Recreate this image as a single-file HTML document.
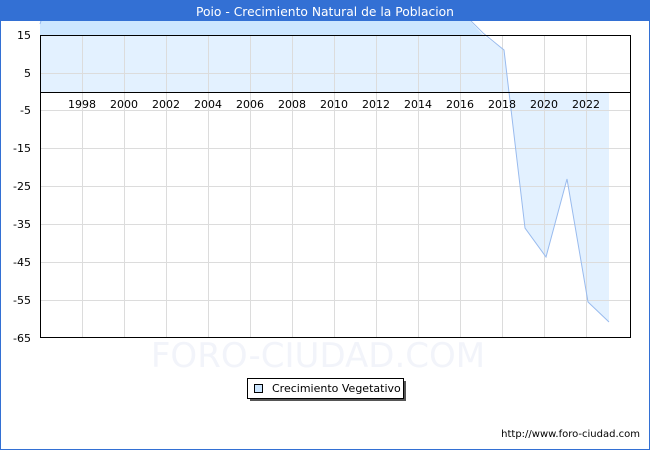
<!DOCTYPE html>
<html><head><meta charset="utf-8"><style>
body{margin:0;width:650px;height:450px;overflow:hidden;background:#fff;font-family:"DejaVu Sans","Liberation Sans",sans-serif}
</style></head><body>
<svg width="650" height="450" xmlns="http://www.w3.org/2000/svg" font-family="DejaVu Sans, Liberation Sans, sans-serif">
<rect x="0.5" y="0.5" width="649" height="449" fill="#fff" stroke="#3370d4"/>
<polygon points="40,21 470,21 483,35 40,35" fill="#cce6ff"/>
<polygon points="40,35 483,35 504,50 525,228 546,257 567,179 588,302 609,322 609,92 40,92" fill="#e3f1ff"/>
<g stroke="#dcdcdc" stroke-width="1">
<line x1="40" y1="73.5" x2="630" y2="73.5"/><line x1="40" y1="110.5" x2="630" y2="110.5"/><line x1="40" y1="148.5" x2="630" y2="148.5"/><line x1="40" y1="186.5" x2="630" y2="186.5"/><line x1="40" y1="224.5" x2="630" y2="224.5"/><line x1="40" y1="262.5" x2="630" y2="262.5"/><line x1="40" y1="300.5" x2="630" y2="300.5"/>
<line x1="82.5" y1="35" x2="82.5" y2="338"/><line x1="124.5" y1="35" x2="124.5" y2="338"/><line x1="166.5" y1="35" x2="166.5" y2="338"/><line x1="208.5" y1="35" x2="208.5" y2="338"/><line x1="250.5" y1="35" x2="250.5" y2="338"/><line x1="292.5" y1="35" x2="292.5" y2="338"/><line x1="334.5" y1="35" x2="334.5" y2="338"/><line x1="376.5" y1="35" x2="376.5" y2="338"/><line x1="418.5" y1="35" x2="418.5" y2="338"/><line x1="460.5" y1="35" x2="460.5" y2="338"/><line x1="502.5" y1="35" x2="502.5" y2="338"/><line x1="544.5" y1="35" x2="544.5" y2="338"/><line x1="586.5" y1="35" x2="586.5" y2="338"/>
</g>
<polyline points="40,24 42,18 468,18 483,33 504,50 525,228 546,257 567,179 588,302 609,322" fill="none" stroke="#99bbee" stroke-width="1"/>
<rect x="40.5" y="35.5" width="590" height="302" fill="none" stroke="#000"/>
<line x1="40" y1="92.5" x2="630" y2="92.5" stroke="#000"/>
<rect x="0" y="0" width="650" height="21" fill="#3370d4"/>
<text x="325" y="16" font-size="12.3" fill="#fff" text-anchor="middle">Poio - Crecimiento Natural de la Poblacion</text>
<g font-size="11" fill="#000" text-anchor="end">
<text x="31" y="39">15</text><text x="31" y="77">5</text><text x="31" y="114">-5</text><text x="31" y="152">-15</text><text x="31" y="190">-25</text><text x="31" y="228">-35</text><text x="31" y="266">-45</text><text x="31" y="304">-55</text><text x="31" y="342">-65</text>
</g>
<g font-size="11" fill="#000" text-anchor="middle">
<text x="82" y="108">1998</text><text x="124" y="108">2000</text><text x="166" y="108">2002</text><text x="208" y="108">2004</text><text x="250" y="108">2006</text><text x="292" y="108">2008</text><text x="334" y="108">2010</text><text x="376" y="108">2012</text><text x="418" y="108">2014</text><text x="460" y="108">2016</text><text x="502" y="108">2018</text><text x="544" y="108">2020</text><text x="586" y="108">2022</text>
</g>
<text x="318" y="367" font-size="34" fill="#f2f4fa" text-anchor="middle">FORO-CIUDAD.COM</text>
<rect x="250" y="381" width="156" height="20" fill="#555"/>
<rect x="247.5" y="378.5" width="156" height="20" fill="#fff" stroke="#000"/>
<rect x="254.5" y="384.5" width="8" height="8" fill="#cce6ff" stroke="#000"/>
<text x="272" y="392" font-size="11" fill="#000">Crecimiento Vegetativo</text>
<text x="640" y="437" font-size="10" fill="#000" text-anchor="end">http://www.foro-ciudad.com</text>
</svg>
</body></html>
